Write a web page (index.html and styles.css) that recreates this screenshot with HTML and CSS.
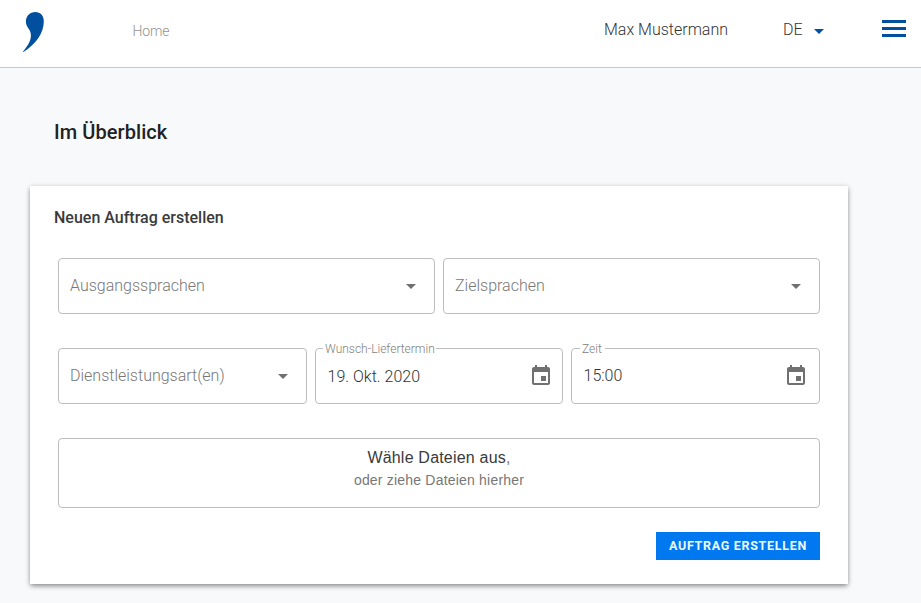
FILE: index.html
```html
<!DOCTYPE html>
<html lang="de">
<head>
<meta charset="utf-8">
<title>Im Überblick</title>
<link rel="stylesheet" href="styles.css">
</head>
<body>
<header class="topbar">
  <svg class="logo" width="22" height="42" viewBox="0 0 22 42"><path d="M13.3 1C18.6 1 21.8 4.6 21.8 10.4c0 11.5-8 22.7-20.4 30.5l-.4-.5C6.300 34.500 9 29 8.900 24.200c-.1-2.600-.9-4.300-2.100-6.100C5.200 15.800 3.900 13.500 3.900 10.500 3.900 5 8 1 13.300 1z"/></svg>
  <nav class="nav"><span class="home">Home</span></nav>
  <span class="user">Max Mustermann</span>
  <span class="lang">DE</span>
  <svg class="lang-caret" width="10" height="5" viewBox="0 0 10 5"><path d="M0 0h10L5 5z"/></svg>
  <span class="menu"><i></i><i></i><i></i></span>
</header>
<main>
  <h1>Im Überblick</h1>
  <section class="card">
    <h2>Neuen Auftrag erstellen</h2>
    <div class="row two">
      <div class="field"><span class="placeholder">Ausgangssprachen</span><svg class="caret" width="10" height="5" viewBox="0 0 10 5"><path d="M0 0h10L5 5z"/></svg></div>
      <div class="field"><span class="placeholder">Zielsprachen</span><svg class="caret" width="10" height="5" viewBox="0 0 10 5"><path d="M0 0h10L5 5z"/></svg></div>
    </div>
    <div class="row three">
      <div class="field"><span class="placeholder">Dienstleistungsart(en)</span><svg class="caret" width="10" height="5" viewBox="0 0 10 5"><path d="M0 0h10L5 5z"/></svg></div>
      <div class="field labelled"><span class="label">Wunsch-Liefertermin</span><span class="value date">19. Okt. 2020</span><svg class="calendar" width="24" height="24" viewBox="0 0 24 24"><path d="M17 12h-5v5h5v-5zM16 1v2H8V1H6v2H5c-1.110 0-1.990.9-1.990 2L3 19c0 1.100.89 2 2 2h14c1.100 0 2-.9 2-2V5c0-1.100-.9-2-2-2h-1V1h-2zm3 18H5V8h14v11z"/></svg></div>
      <div class="field labelled time"><span class="label">Zeit</span><span class="value">15:00</span><svg class="calendar" width="24" height="24" viewBox="0 0 24 24"><path d="M17 12h-5v5h5v-5zM16 1v2H8V1H6v2H5c-1.110 0-1.990.9-1.990 2L3 19c0 1.100.89 2 2 2h14c1.100 0 2-.9 2-2V5c0-1.100-.9-2-2-2h-1V1h-2zm3 18H5V8h14v11z"/></svg></div>
    </div>
    <div class="drop"><span class="drop-main">Wähle Dateien aus<span class="comma">,</span></span><span class="drop-sub">oder ziehe Dateien hierher</span></div>
    <button class="submit">AUFTRAG ERSTELLEN</button>
  </section>
</main>
</body>
</html>
```
FILE: styles.css
```css
* { box-sizing: border-box; }
body {
  margin: 0;
  height: 603px;
  overflow: hidden;
  background: #f8f9fb;
  font-family: Roboto, sans-serif;
  font-weight: 300;
  color: #333;
}
span { white-space: nowrap; }
svg { display: block; flex: none; }
.topbar {
  display: flex;
  align-items: flex-start;
  height: 68px;
  padding: 0 15px 0 22px;
  background: #fff;
  border-bottom: 1px solid #c6c8ca;
}
.logo { margin-top: 11px; fill: #00509f; }
.nav { flex: 1; padding-left: 88.5px; }
.home { display: block; margin-top: 21px; font-size: 14px; line-height: 20px; color: #929292; letter-spacing: -.1px; }
.user { width: 179px; margin-top: 20px; font-size: 16px; line-height: 20px; }
.lang { width: 31px; margin-top: 20px; font-size: 16px; line-height: 20px; }
.lang-caret { margin-top: 29px; fill: #00509f; }
.menu { display: flex; flex-direction: column; gap: 4px; width: 24px; margin: 20px 0 0 58px; }
.menu i { height: 3px; background: #00509f; }
h1 { margin: 0; padding: 52px 0 0 54px; height: 118px; font-size: 20px; line-height: 24px; font-weight: 500; color: #222; letter-spacing: .07px; }
.card {
  display: flex;
  flex-direction: column;
  width: 818px;
  height: 398px;
  margin-left: 30px;
  padding: 22px 28px 24px;
  background: #fff;
  box-shadow: 0 3px 5px -1px rgba(0,0,0,.3), 0 1px 5px rgba(0,0,0,.25);
}
h2 { margin: 0 0 30px -4px; font-size: 16px; line-height: 20px; font-weight: 500; color: #3a3a3a; }
.row { display: grid; gap: 8px; height: 56px; margin-bottom: 34px; }
.two { grid-template-columns: 377px 377px; }
.three { grid-template-columns: 249px 248px 249px; }
.field {
  position: relative;
  display: flex;
  align-items: center;
  justify-content: space-between;
  padding: 0 18px 0 11px;
  border: 1px solid #bdbdbd;
  border-radius: 4px;
}
.placeholder { font-size: 16px; line-height: 20px; color: #777; }
.caret { fill: #707070; }
.labelled { padding: 0 9px 0 11.5px; }
.time { padding-right: 11px; }
.label {
  position: absolute;
  top: -7px;
  left: 7px;
  padding: 0 1px 0 2px;
  background: #fff;
  font-size: 12px;
  line-height: 15px;
  color: #808080;
}
.time .label { left: 8px; padding-right: 3px; }
.value { font-size: 16px; line-height: 20px; }
.date { padding-top: 1px; }
.calendar { fill: #707070; }
.drop {
  display: flex;
  flex-direction: column;
  align-items: center;
  height: 70px;
  padding-top: 8px;
  border: 1px solid #bdbdbd;
  border-radius: 4px;
  font-family: "Liberation Sans", sans-serif;
  font-weight: 400;
}
.drop-main { font-size: 16px; line-height: 22px; color: #3a3a3a; letter-spacing: .2px; }
.comma { color: #777; }
.drop-sub { font-size: 14px; line-height: 22px; color: #777; letter-spacing: .2px; }
.submit {
  align-self: flex-end;
  width: 164px;
  height: 28px;
  margin-top: 24px;
  padding: 0;
  border: 0;
  background: #0078f0;
  color: #e8fbff;
  font: 700 12.5px/28px Roboto, sans-serif;
  letter-spacing: .7px;
  white-space: nowrap;
}
```
